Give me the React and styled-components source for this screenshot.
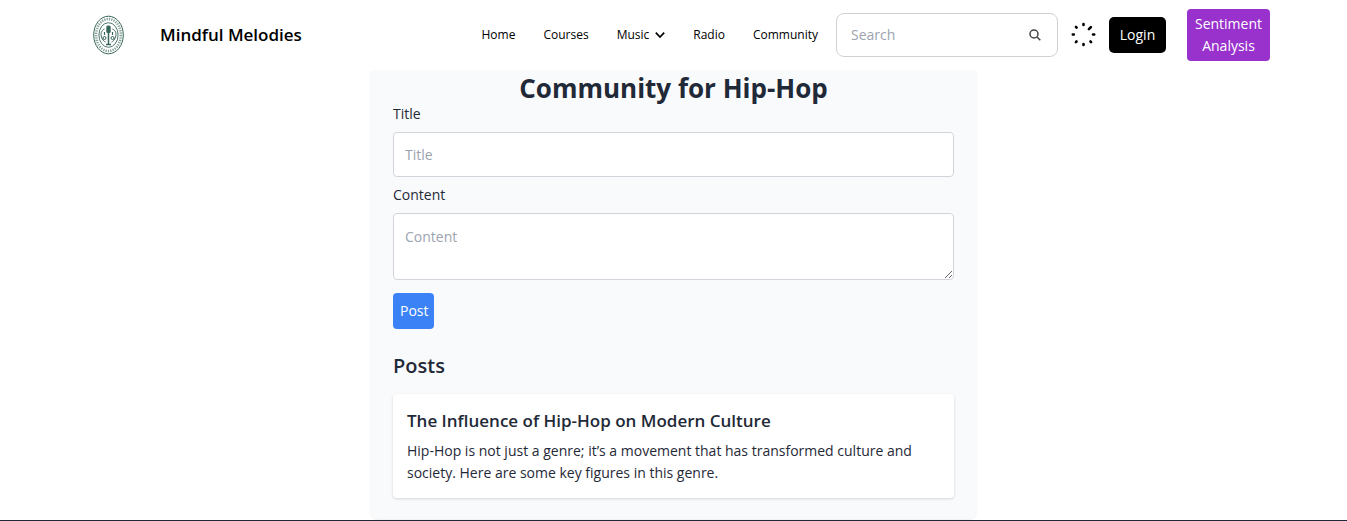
import React from "react";
import styled, { createGlobalStyle } from "styled-components";

const Global = createGlobalStyle`
  *, *::before, *::after { box-sizing: border-box; }
  body {
    margin: 0;
    background: #fff;
    color: #1f2937;
    font-family: "Segoe UI", "Open Sans", "Noto Sans", sans-serif;
    font-size: 14px;
    line-height: 22px;
  }
  h1, h2, h3, p { margin: 0; }
  input, textarea, button { font: inherit; }
`;

const Header = styled.header`
  display: flex;
  align-items: center;
  height: 71px;
  padding: 0 77px 2px 93px;
  background: #fff;
  color: #000;
`;

const Brand = styled.a`
  display: flex;
  align-items: center;
  gap: 36px;
  color: #000;
  font-size: 17px;
  font-weight: 600;
  text-decoration: none;
  white-space: nowrap;
`;

const Nav = styled.nav`
  display: flex;
  align-items: center;
  gap: 28px;
  margin-left: auto;
  font-size: 12px;
`;

const NavLink = styled.a`
  color: #000;
  text-decoration: none;
`;

const NavMenu = styled.button`
  display: flex;
  align-items: center;
  gap: 6px;
  padding: 0;
  border: 0;
  background: none;
  color: #000;
  cursor: pointer;
`;

const SearchBox = styled.form`
  display: flex;
  align-items: center;
  width: 222px;
  height: 44px;
  margin: 0 13px 0 18px;
  padding: 0 16px 0 14px;
  border: 1px solid #d1d1d1;
  border-radius: 8px;
`;

const SearchInput = styled.input`
  flex: 1;
  min-width: 0;
  padding: 0;
  border: 0;
  outline: 0;
  background: none;
  &::placeholder { color: #9ca3af; }
`;

const SearchButton = styled.button`
  display: flex;
  padding: 0;
  border: 0;
  background: none;
  color: #444;
`;

const Button = styled.button`
  padding: ${(p) => p.$pad || 7}px 7px;
  border: 0;
  border-radius: ${(p) => p.$radius || 5}px;
  background: ${(p) => p.$bg};
  color: #fff;
  width: ${(p) => p.$width}px;
  margin-left: ${(p) => p.$gap || 0}px;
  cursor: pointer;
`;

const Panel = styled.main`
  max-width: 605px;
  margin: 0 auto;
  padding: 1px 22px 21px;
  border-radius: 0 0 8px 8px;
  background: #f9fafb;
  box-shadow: 0 1px 3px rgba(0, 0, 0, 0.08);
`;

const PageTitle = styled.h1`
  font-size: 26px;
  font-weight: 700;
  line-height: 32px;
  text-align: center;
`;

const Form = styled.form`
  display: flex;
  flex-direction: column;
  align-items: flex-start;
`;

const Label = styled.label`
  line-height: 20px;
  margin-bottom: 8px;
`;

const field = `
  display: block;
  width: 100%;
  padding: 10px 11px;
  border: 1px solid #d1d5db;
  border-radius: 4px;
  background: #fff;
  color: #1f2937;
  outline: 0;
  &::placeholder { color: #9ca3af; }
`;

const TextField = styled.input`
  ${field}
  height: 45px;
  margin-bottom: 8px;
`;

const TextArea = styled.textarea`
  ${field}
  height: 67px;
  margin-bottom: 13px;
  padding-top: 12px;
  resize: vertical;
`;

const SectionTitle = styled.h2`
  margin: 22px 0 14px;
  font-size: 20px;
  font-weight: 600;
  line-height: 29px;
`;

const PostCard = styled.article`
  padding: 14px;
  border-radius: 4px;
  background: #fff;
  box-shadow: 0 1px 3px rgba(0, 0, 0, 0.15);
`;

const PostTitle = styled.h3`
  margin-bottom: 7px;
  font-size: 17px;
  font-weight: 600;
  line-height: 25px;
`;

const Footer = styled.footer`
  height: 1px;
  margin-top: 1px;
  background: #1f2937;
`;

function Logo() {
  return (
    <svg width="31" height="40" viewBox="0 0 31 40" fill="none" stroke="#38665a" aria-hidden="true">
      <ellipse cx="15.5" cy="20" rx="14.8" ry="18.8" strokeWidth="1" />
      <ellipse cx="15.5" cy="20" rx="12.4" ry="16" strokeWidth="2.6" strokeDasharray="1.3 1.1" opacity="0.6" />
      <ellipse cx="15.5" cy="20" rx="9.6" ry="12.3" strokeWidth="0.9" />
      <path d="M15.500 15v14.500M13 29.500h5" strokeWidth="1.500" />
      <rect x="13.300" y="10.500" width="4.400" height="7.500" rx="1.500" fill="#38665a" stroke="none" />
      <path d="M11.500 14c-3.500 1.500-4 5-3 8s2.500 4.500 4 5M19.500 14c3.500 1.500 4 5 3 8s-2.500 4.500-4 5" strokeWidth="1" />
      <path d="M11.500 17v3M19.500 17v3" strokeWidth="1.200" />
      <circle cx="11.500" cy="23" r="1.500" />
      <circle cx="19.500" cy="23" r="1.500" />
    </svg>
  );
}

function Spinner() {
  return (
    <svg width="25" height="25" viewBox="0 0 25 25" stroke="#000" strokeWidth="2.600" strokeLinecap="round" role="img" aria-label="Loading">
      <path d="M12.500 2v1M12.500 22v1M1.800 12.500h1M22 12.500h1.200M5 5l.6.6M17.900 7.100l2-2M4.900 20.100l.6-.6M19.500 19.500l.6.6" />
    </svg>
  );
}

export default function App() {
  return (
    <>
      <Global />
      <Header>
        <Brand href="#"><Logo />Mindful Melodies</Brand>
        <Nav>
          <NavLink href="#">Home</NavLink>
          <NavLink href="#">Courses</NavLink>
          <NavMenu type="button">
            Music
            <svg width="10" height="8" viewBox="0 0 10 8" fill="none" stroke="#000" strokeWidth="1.700" aria-hidden="true">
              <path d="M.8 1.700L5 6l4.200-4.300" />
            </svg>
          </NavMenu>
          <NavLink href="#">Radio</NavLink>
          <NavLink href="#">Community</NavLink>
        </Nav>
        <SearchBox role="search">
          <SearchInput type="text" placeholder="Search" aria-label="Search" />
          <SearchButton type="button" aria-label="Submit search">
            <svg width="12" height="12" viewBox="0 0 12 12" fill="none" stroke="currentColor" strokeWidth="1.500" aria-hidden="true">
              <circle cx="5" cy="5" r="4" />
              <path d="M8 8l3.300 3.300" />
            </svg>
          </SearchButton>
        </SearchBox>
        <Spinner />
        <Button type="button" $bg="#000" $width={57} $gap={13}>Login</Button>
        <Button type="button" $bg="#9932cc" $width={83} $gap={21} $radius={4} $pad={4}>Sentiment Analysis</Button>
      </Header>
      <Panel>
        <PageTitle>Community for Hip-Hop</PageTitle>
        <Form>
          <Label htmlFor="title">Title</Label>
          <TextField id="title" type="text" placeholder="Title" />
          <Label htmlFor="content">Content</Label>
          <TextArea id="content" placeholder="Content" />
          <Button type="button" $bg="#3b82f6" $width={41} $radius={4}>Post</Button>
        </Form>
        <SectionTitle>Posts</SectionTitle>
        <PostCard>
          <PostTitle>The Influence of Hip-Hop on Modern Culture</PostTitle>
          <p>Hip-Hop is not just a genre; it’s a movement that has transformed culture and society. Here are some key figures in this genre.</p>
        </PostCard>
      </Panel>
      <Footer />
    </>
  );
}
